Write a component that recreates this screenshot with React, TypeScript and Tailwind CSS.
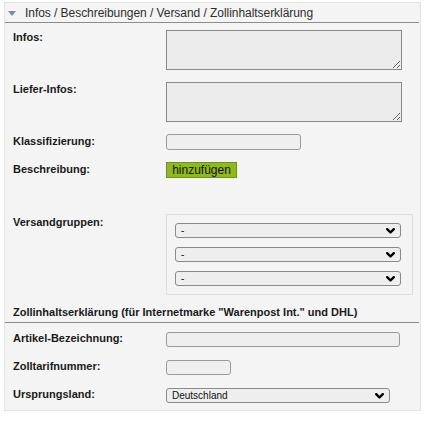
import React from "react";

const FONT = { fontFamily: '"Liberation Sans", Arial, sans-serif' };

function Chevron() {
  return (
    <svg width="9" height="6" viewBox="0 0 9 6" className="shrink-0">
      <path d="M1.2 1.2 L4.5 4.5 L7.8 1.2" fill="none" stroke="#000" strokeWidth="2.4" strokeLinecap="round" strokeLinejoin="round" />
    </svg>
  );
}

function FakeSelect({ value, width }: { value: string; width: string }) {
  return (
    <div className={`${width} h-[15px] rounded-[3px] border border-[#8a8a8a] bg-[#eeeeee] flex items-center justify-between pl-[5px] pr-[5px]`}>
      <span className="text-[10px] leading-none text-[#111]">{value}</span>
      <Chevron />
    </div>
  );
}

function Row({ label, pt, mt, children }: { label: string; pt: string; mt: string; children: React.ReactNode }) {
  return (
    <div className={`flex items-start ${mt}`}>
      <div className={`w-[153px] shrink-0 text-[11px] leading-[13px] font-bold text-[#1a1a1a] ${pt}`}>{label}</div>
      {children}
    </div>
  );
}

export default function App() {
  return (
    <div className="w-[427px] h-[423px] bg-white pt-[2px]" style={FONT}>
      <div className="ml-[4px] w-[417px] border border-[#e3e3e3] bg-[#f4f4f4]">
        {/* header */}
        <div className="h-[20px] mr-[1px] border-b border-[#8c8c8c] flex items-center pl-[3px]">
          <svg width="8" height="5" viewBox="0 0 8 5" className="mt-[1px]">
            <path d="M0 0 L8 0 L4 5 Z" fill="#6f8cbf" />
          </svg>
          <span className="ml-[9px] text-[12px] leading-none text-[#2e2e2e] tracking-[-0.05px]">
            Infos / Beschreibungen / Versand / Zollinhaltserklärung
          </span>
        </div>

        <div className="pl-[8px]">
          <Row label="Infos:" pt="pt-px" mt="mt-[7px]">
            <textarea className="w-[236px] h-[40px] border border-[#8a8a8a] bg-[#ececec] outline-none" />
          </Row>
          <Row label="Liefer-Infos:" pt="pt-px" mt="mt-[12px]">
            <textarea className="w-[236px] h-[40px] border border-[#8a8a8a] bg-[#ececec] outline-none" />
          </Row>
          <Row label="Klassifizierung:" pt="pt-px" mt="mt-[12px]">
            <div className="w-[135px] h-[16px] rounded-[3px] border border-[#9a9a9a] bg-[#efefef]" />
          </Row>
          <Row label="Beschreibung:" pt="pt-[1px]" mt="mt-[12px]">
            <div className="w-[71px] h-[16px] border border-[#6f9317] bg-[#8fb91f] flex items-center justify-center text-[12px] leading-none text-[#111]">
              hinzufügen
            </div>
          </Row>
          <Row label="Versandgruppen:" pt="pt-[2px]" mt="mt-[36px]">
            <div className="w-[247px] h-[81px] border border-[#dedede] flex flex-col gap-[9px] pt-[8px] pl-[8px]">
              <FakeSelect value="-" width="w-[226px]" />
              <FakeSelect value="-" width="w-[226px]" />
              <FakeSelect value="-" width="w-[226px]" />
            </div>
          </Row>
        </div>

        <div className="mt-[8px] h-[20px] mr-[1px] border-b border-[#8c8c8c] flex items-center pl-[8px] text-[11px] leading-none text-[#1a1a1a] font-bold">
          Zollinhaltserklärung (für Internetmarke "Warenpost Int." und DHL)
        </div>

        <div className="pl-[8px] pb-[7px]">
          <Row label="Artikel-Bezeichnung:" pt="pt-0" mt="mt-[9px]">
            <div className="w-[234px] h-[15px] rounded-[3px] border border-[#9a9a9a] bg-[#efefef]" />
          </Row>
          <Row label="Zolltarifnummer:" pt="pt-0" mt="mt-[13px]">
            <div className="w-[65px] h-[15px] rounded-[3px] border border-[#9a9a9a] bg-[#efefef]" />
          </Row>
          <Row label="Ursprungsland:" pt="pt-0" mt="mt-[13px]">
            <FakeSelect value="Deutschland" width="w-[224px]" />
          </Row>
        </div>
      </div>
    </div>
  );
}
